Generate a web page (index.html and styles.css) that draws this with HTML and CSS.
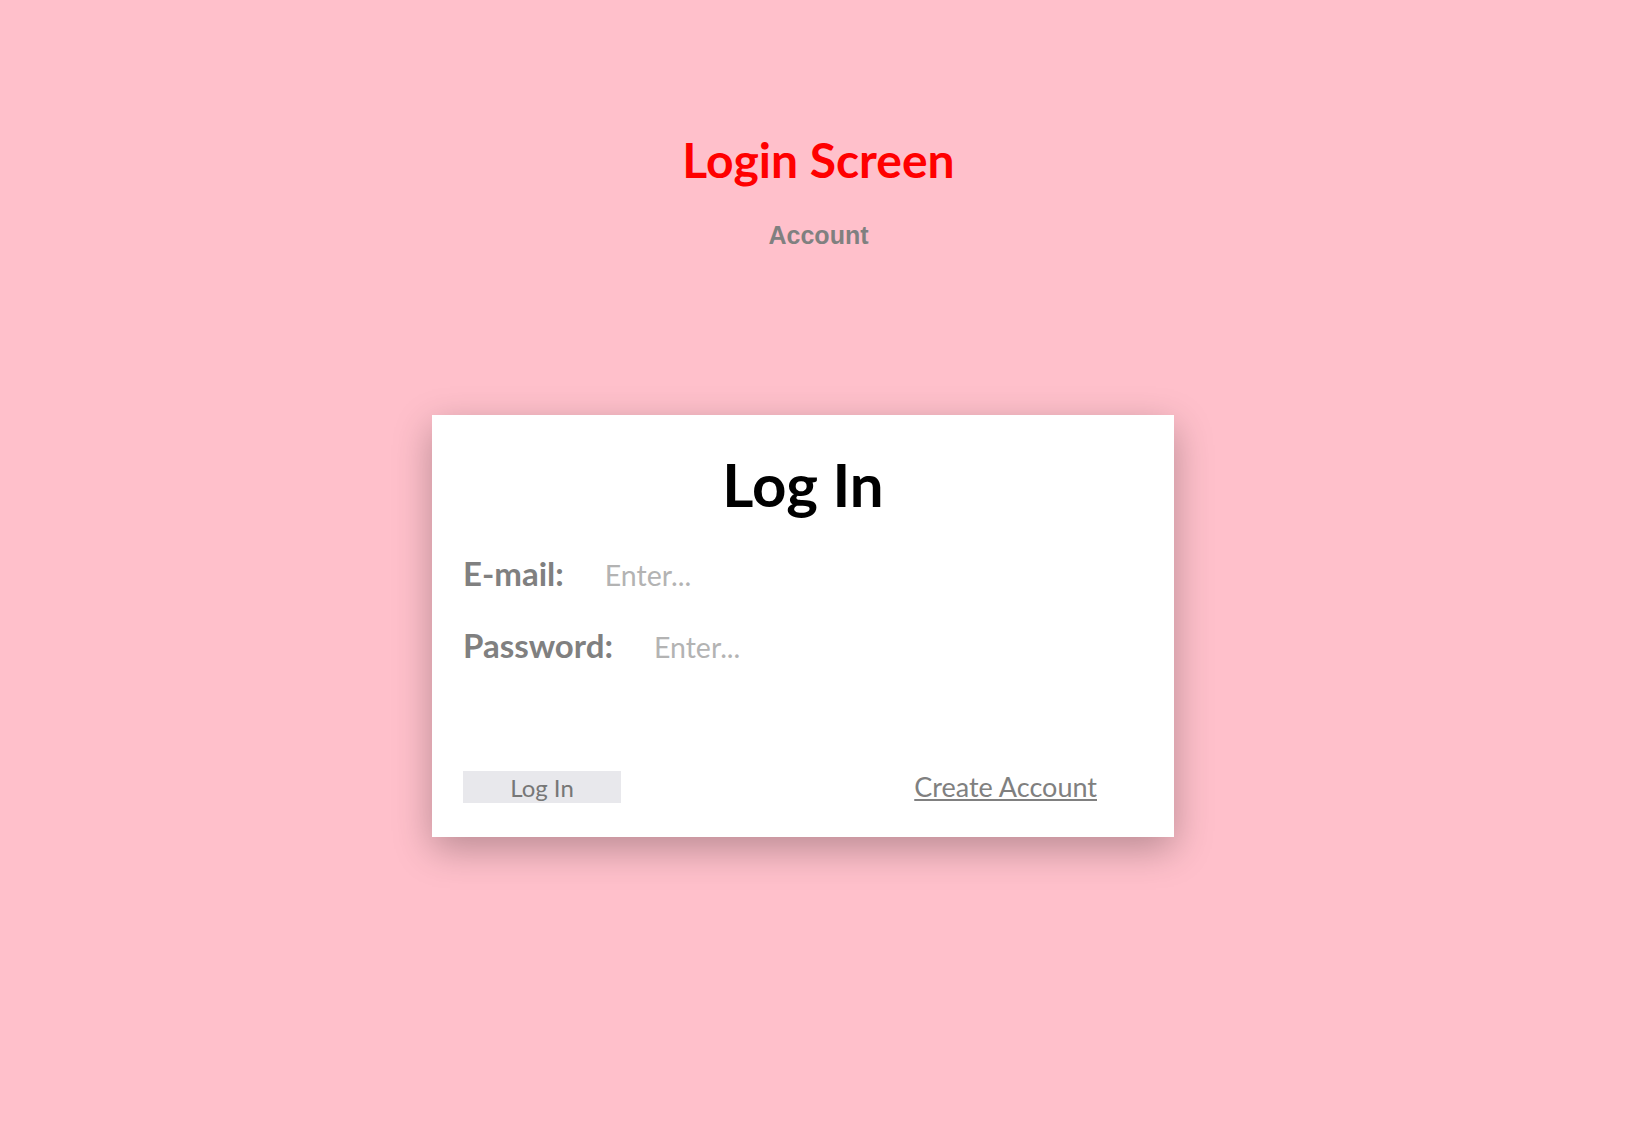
FILE: index.html
```html
<!DOCTYPE html>
<html lang="en">
<head>
<meta charset="utf-8">
<title>Login Screen</title>
<link rel="stylesheet" href="styles.css">
</head>
<body>
  <header class="page-header">
    <h1 class="page-title">Login Screen</h1>
    <h2 class="page-subtitle">Account</h2>
  </header>
  <main class="card">
    <h2 class="card-title">Log In</h2>
    <div class="field field--email">
      <label class="field-label" for="email">E-mail:</label>
      <input class="field-input" id="email" type="text" placeholder="Enter...">
    </div>
    <div class="field field--password">
      <label class="field-label" for="password">Password:</label>
      <input class="field-input" id="password" type="password" placeholder="Enter...">
    </div>
    <div class="card-actions">
      <button class="login-btn" type="button">Log In</button>
      <a class="create-link" href="#">Create Account</a>
    </div>
  </main>
</body>
</html>
```
FILE: styles.css
```css
html, body {
  margin: 0;
  padding: 0;
}
body {
  background: #ffc0cb;
  min-height: 1144px;
  font-family: "Lato", "Open Sans", sans-serif;
}
.page-header {
  display: flex;
  flex-direction: column;
  align-items: center;
  padding-top: 131px;
}
.page-title {
  margin: 0;
  font-family: "Lato", sans-serif;
  font-weight: 700;
  font-size: 48px;
  line-height: 1.2;
  color: #ff0000;
}
.page-subtitle {
  margin: 32px 0 0;
  font-family: "Liberation Sans", Arial, sans-serif;
  font-weight: 700;
  font-size: 25px;
  line-height: 1.15;
  color: #808080;
}
.card {
  box-sizing: border-box;
  width: 742px;
  margin: 166px 0 0 432px;
  padding: 33px 31px 34px;
  background: #ffffff;
  box-shadow: 0 12px 36px rgba(0, 0, 0, 0.28);
  display: flex;
  flex-direction: column;
}
.card-title {
  margin: 0;
  text-align: center;
  font-family: "Lato", sans-serif;
  font-weight: 700;
  font-size: 60px;
  line-height: 1.2;
  color: #000000;
}
.field {
  display: flex;
  align-items: baseline;
}
.field--email {
  margin-top: 34px;
}
.field--password {
  margin-top: 32px;
}
.field-label {
  margin-right: 41px;
  font-family: "Lato", sans-serif;
  font-weight: 700;
  font-size: 33px;
  line-height: 1.2;
  color: #808080;
}
.field-input {
  flex: 1;
  border: none;
  outline: none;
  padding: 0;
  background: transparent;
  font-family: "Lato", sans-serif;
  font-size: 28.5px;
  line-height: 1.2;
  color: #555555;
}
.field-input::placeholder {
  color: #b3b3b3;
}
.card-actions {
  display: flex;
  justify-content: space-between;
  align-items: baseline;
  margin-top: 105px;
  padding-right: 46px;
}
.login-btn {
  box-sizing: border-box;
  width: 158px;
  height: 32px;
  padding: 2px 0 0;
  border: none;
  background: #e8e8ec;
  font-family: "Lato", sans-serif;
  font-size: 24px;
  line-height: 28px;
  color: #777777;
  text-align: center;
}
.create-link {
  font-family: "Lato", sans-serif;
  font-size: 27px;
  line-height: 1.2;
  color: #808080;
  text-decoration: underline;
}
```
